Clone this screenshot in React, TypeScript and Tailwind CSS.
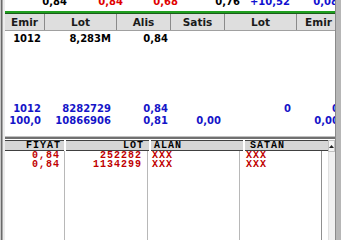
const topRow = [
  { v: '0,84', c: 'text-black' },
  { v: '0,84', c: 'text-[#e00000]' },
  { v: '0,68', c: 'text-[#e00000]' },
  { v: '0,76', c: 'text-black' },
  { v: '+10,52', c: 'text-[#1010d0]' },
  { v: '0,08', c: 'text-[#1010d0]' },
];

const heads = ['Emir', 'Lot', 'Alis', 'Satis', 'Lot', 'Emir'];

const blueRows = [
  ['1012', '8282729', '0,84', '', '0', '0'],
  ['100,0', '10866906', '0,81', '0,00', '', '0,00'],
];

const trades = [
  ['0,84', '252282', 'XXX', 'XXX'],
  ['0,84', '1134299', 'XXX', 'XXX'],
];

const cols = 'grid grid-cols-[40px_72px_54px_54px_72px_44px]';
const cellPad = ['pr-[4px]', 'pr-[6px]', 'pr-[3px]', 'pr-[4px]', 'pr-[6px]', 'pr-[2px]'];

export default function App() {
  return (
    <div className="flex h-[240px] w-[341px] overflow-hidden bg-white font-['DejaVu_Sans',sans-serif]">
      {/* left frame */}
      <div className="flex h-full w-[5px] shrink-0">
        <div className="w-px bg-[#c8c8c8]" />
        <div className="w-px bg-[#6a6a6a]" />
        <div className="w-px bg-[#a8a8a8]" />
        <div className="w-[2px] bg-[#ececec]" />
      </div>

      <div className="flex w-[330px] shrink-0 flex-col overflow-hidden">
        {/* scrolled-off quote row */}
        <div className="h-[11px] overflow-hidden">
          <div className="-mt-[6px] grid grid-cols-[62px_56px_55px_62px_50px_48px] text-[10px] font-bold leading-[15px]">
            {topRow.map((t, i) => (
              <div key={i} className={`text-right ${t.c}`}>{t.v}</div>
            ))}
          </div>
        </div>
        <div className="h-[2px] bg-[#1fa01f]" />
        <div className="h-px bg-[#1a5a1a]" />

        {/* depth header */}
        <div className={`${cols} h-[17px] border-b border-[#a0a0a0] bg-[#dedede] text-[10.5px] font-bold leading-[16px] text-[#1a1a1a]`}>
          {heads.map((h, i) => (
            <div key={i} className="border-r border-[#8a8a8a] text-center">{h}</div>
          ))}
        </div>

        {/* depth body */}
        <div className="flex h-[105px] flex-col text-[10px] font-bold leading-[12px]">
          <div className={`${cols} mt-[2px] text-black`}>
            <div className="pr-[4px] text-right">1012</div>
            <div className="pr-[6px] text-right">8,283M</div>
            <div className="pr-[3px] text-right">0,84</div>
          </div>
          <div className="flex-1" />
          {blueRows.map((r, ri) => (
            <div key={ri} className={`${cols} text-[#1414c8]`}>
              {r.map((v, i) => (
                <div key={i} className={`whitespace-nowrap text-right ${cellPad[i]}`}>{v}</div>
              ))}
            </div>
          ))}
          <div className="h-[9px]" />
        </div>

        {/* splitter */}
        <div className="h-px bg-[#c0c0c0]" />
        <div className="h-[2px] bg-[#707070]" />
        <div className="h-px bg-white" />

        {/* trades grid */}
        <div className="flex flex-1">
          <div className="flex flex-1 flex-col font-['Liberation_Mono',monospace] text-[10px] font-bold tracking-[1px]">
            <div className="grid h-[11px] grid-cols-[59px_83px_92px_83px] gap-x-[2px] leading-[9px] text-black">
              <div className="border-t border-b border-[#404040] bg-[#d6d6d6] pr-[3px] text-right">FIYAT</div>
              <div className="border-t border-b border-[#404040] bg-[#d6d6d6] pr-[5px] text-right">LOT</div>
              <div className="border-t border-b border-[#404040] bg-[#d6d6d6] pl-[3px]">ALAN</div>
              <div className="border-t border-b border-[#404040] bg-[#d6d6d6] pl-[5px]">SATAN</div>
            </div>
            <div className="grid flex-1 grid-cols-[60px_83px_92px_82px] leading-[9px] text-[#c00000]">
              <div className="border-r border-[#b8b8b8] pr-[4px] text-right">
                {trades.map((t, i) => <div key={i}>{t[0]}</div>)}
              </div>
              <div className="border-r border-[#b8b8b8] pr-[5px] text-right">
                {trades.map((t, i) => <div key={i}>{t[1]}</div>)}
              </div>
              <div className="border-r border-[#b8b8b8] pl-[4px]">
                {trades.map((t, i) => <div key={i}>{t[2]}</div>)}
              </div>
              <div className="border-r border-[#909090] pl-[6px]">
                {trades.map((t, i) => <div key={i}>{t[3]}</div>)}
              </div>
            </div>
          </div>
          {/* scrollbar */}
          <div className="flex w-[13px] flex-col bg-[#f0f0f0]">
            <div className="flex h-[12px] items-center justify-center border border-[#c0c0c0] bg-[#f4f4f4]">
              <svg width="5" height="3" viewBox="0 0 5 3">
                <path d="M2.5 0 L5 3 L0 3 Z" fill="#202020" />
              </svg>
            </div>
            <div className="flex-1 border-l border-[#e0e0e0]" />
          </div>
        </div>
      </div>

      {/* right frame */}
      <div className="flex h-full w-[6px] shrink-0">
        <div className="w-px bg-[#8a8a8a]" />
        <div className="flex-1 bg-[#b6b6b6]" />
      </div>
    </div>
  );
}
